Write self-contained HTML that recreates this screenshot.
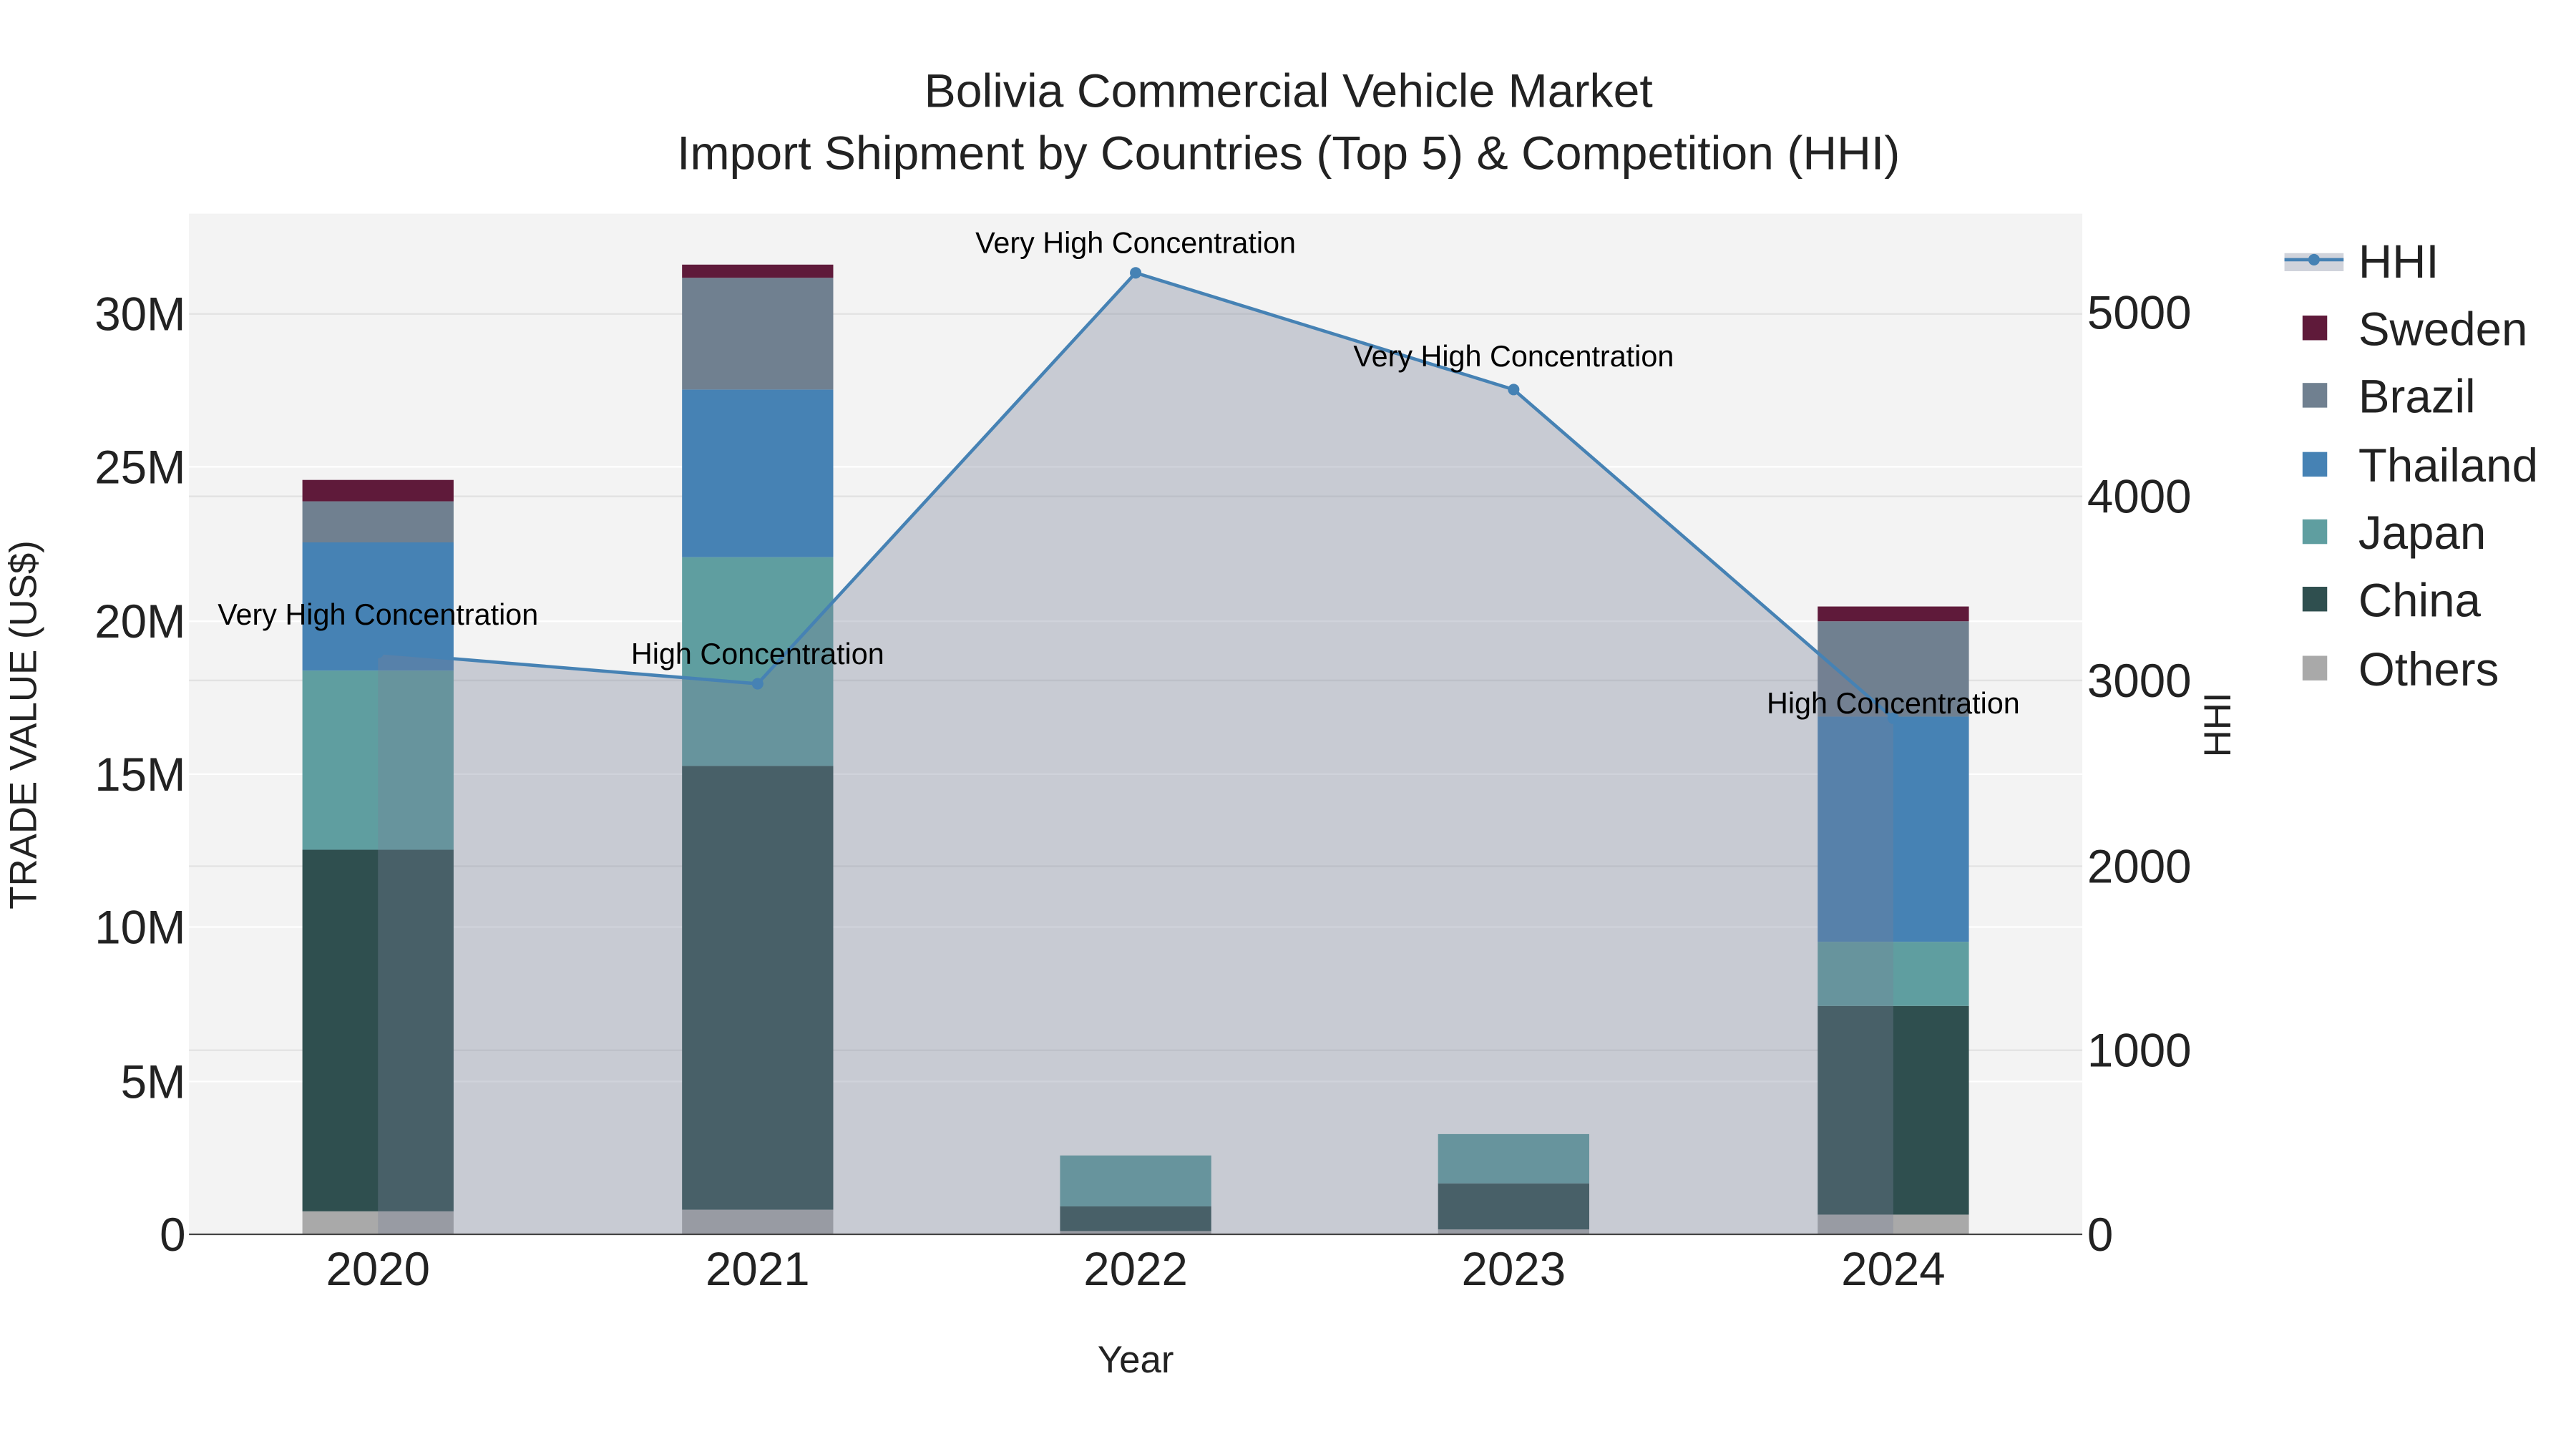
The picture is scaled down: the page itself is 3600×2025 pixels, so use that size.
<!DOCTYPE html>
<html><head><meta charset="utf-8"><style>
html,body{margin:0;padding:0;background:#fff;}
svg{display:block;font-family:"Liberation Sans",Arial,sans-serif;}
</style></head><body>
<svg width="3600" height="2025" viewBox="0 0 1567.4 881.6" preserveAspectRatio="none" xmlns="http://www.w3.org/2000/svg">
<rect x="0" y="0" width="1568" height="882" fill="#fff"/>
<rect x="115" y="130" width="1152" height="621" fill="#f3f3f3"/>
<g stroke="#e2e2e2" stroke-width="1">
<line x1="115" x2="1267" y1="302" y2="302"/><line x1="115" x2="1267" y1="414" y2="414"/>
<line x1="115" x2="1267" y1="527" y2="527"/><line x1="115" x2="1267" y1="639" y2="639"/>
<line x1="115" x2="1267" y1="191" y2="191"/>
</g>
<g stroke="#fff" stroke-width="1">
<line x1="115" x2="1267" y1="284" y2="284"/><line x1="115" x2="1267" y1="378" y2="378"/>
<line x1="115" x2="1267" y1="471" y2="471"/><line x1="115" x2="1267" y1="564" y2="564"/>
<line x1="115" x2="1267" y1="658" y2="658"/>
</g>
<g>
<rect x="184" y="737" width="92" height="14" fill="#a9a9a9"/>
<rect x="184" y="517" width="92" height="220" fill="#2f4f4f"/>
<rect x="184" y="408" width="92" height="109" fill="#5f9ea0"/>
<rect x="184" y="330" width="92" height="78" fill="#4682b4"/>
<rect x="184" y="305" width="92" height="25" fill="#708090"/>
<rect x="184" y="292" width="92" height="13" fill="#5f1a3a"/>

<rect x="415" y="736" width="92" height="15" fill="#a9a9a9"/>
<rect x="415" y="466" width="92" height="270" fill="#2f4f4f"/>
<rect x="415" y="339" width="92" height="127" fill="#5f9ea0"/>
<rect x="415" y="237" width="92" height="102" fill="#4682b4"/>
<rect x="415" y="169" width="92" height="68" fill="#708090"/>
<rect x="415" y="161" width="92" height="8" fill="#5f1a3a"/>

<rect x="645" y="749" width="92" height="2" fill="#a9a9a9"/>
<rect x="645" y="734" width="92" height="15" fill="#2f4f4f"/>
<rect x="645" y="703" width="92" height="31" fill="#5f9ea0"/>

<rect x="875" y="748" width="92" height="3" fill="#a9a9a9"/>
<rect x="875" y="720" width="92" height="28" fill="#2f4f4f"/>
<rect x="875" y="690" width="92" height="30" fill="#5f9ea0"/>

<rect x="1106" y="739" width="92" height="12" fill="#a9a9a9"/>
<rect x="1106" y="612" width="92" height="127" fill="#2f4f4f"/>
<rect x="1106" y="573" width="92" height="39" fill="#5f9ea0"/>
<rect x="1106" y="436" width="92" height="137" fill="#4682b4"/>
<rect x="1106" y="378" width="92" height="58" fill="#708090"/>
<rect x="1106" y="369" width="92" height="9" fill="#5f1a3a"/>
</g>
<polygon points="230,397 461,416 691,166 921,237 1152,437 1152,751 230,751" fill="rgba(119,130,151,0.35)"/>
<polyline points="230,397 461,416 691,166 921,237 1152,437" fill="none" stroke="#4682b4" stroke-width="2"/>
<g fill="#4682b4"><circle cx="230" cy="397" r="3.5"/><circle cx="461" cy="416" r="3.5"/><circle cx="691" cy="166" r="3.5"/><circle cx="921" cy="237" r="3.5"/><circle cx="1152" cy="437" r="3.5"/></g>
<line x1="115" x2="1267" y1="751" y2="751" stroke="#444" stroke-width="1"/>
<g font-size="18" fill="#000" text-anchor="middle">
<text x="230" y="380">Very High Concentration</text>
<text x="461" y="404">High Concentration</text>
<text x="691" y="154">Very High Concentration</text>
<text x="921" y="223">Very High Concentration</text>
<text x="1152" y="434">High Concentration</text>
</g>
<g font-size="28.8" fill="#222" text-anchor="middle">
<text x="784" y="65">Bolivia Commercial Vehicle Market</text>
<text x="784" y="103">Import Shipment by Countries (Top 5) &amp; Competition (HHI)</text>
</g>
<g font-size="28.5" fill="#222" text-anchor="end">
<text x="113" y="761">0</text><text x="113" y="668">5M</text><text x="113" y="574">10M</text>
<text x="113" y="481">15M</text><text x="113" y="388">20M</text><text x="113" y="294">25M</text><text x="113" y="201">30M</text>
</g>
<g font-size="28.5" fill="#222" text-anchor="start">
<text x="1270" y="761">0</text><text x="1270" y="649">1000</text><text x="1270" y="537">2000</text>
<text x="1270" y="424">3000</text><text x="1270" y="312">4000</text><text x="1270" y="200">5000</text>
</g>
<g font-size="28.5" fill="#222" text-anchor="middle">
<text x="230" y="782">2020</text><text x="461" y="782">2021</text><text x="691" y="782">2022</text>
<text x="921" y="782">2023</text><text x="1152" y="782">2024</text>
</g>
<text x="691" y="835" font-size="23" fill="#222" text-anchor="middle">Year</text>
<text transform="translate(22,441) rotate(-90)" font-size="23" fill="#222" text-anchor="middle">TRADE VALUE (US$)</text>
<text transform="translate(1357,441) rotate(-90)" font-size="23" fill="#222" text-anchor="middle">HHI</text>
<rect x="1390" y="154" width="36" height="11" fill="rgba(119,130,151,0.35)"/>
<line x1="1390" x2="1426" y1="158" y2="158" stroke="#4682b4" stroke-width="2"/>
<circle cx="1408" cy="158" r="3.5" fill="#4682b4"/>
<rect x="1401" y="192" width="15" height="15" fill="#5f1a3a"/>
<rect x="1401" y="233" width="15" height="15" fill="#708090"/>
<rect x="1401" y="275" width="15" height="15" fill="#4682b4"/>
<rect x="1401" y="316" width="15" height="15" fill="#5f9ea0"/>
<rect x="1401" y="357" width="15" height="15" fill="#2f4f4f"/>
<rect x="1401" y="399" width="15" height="15" fill="#a9a9a9"/>
<g font-size="28.5" fill="#222">
<text x="1435" y="169">HHI</text><text x="1435" y="210">Sweden</text><text x="1435" y="251">Brazil</text>
<text x="1435" y="293">Thailand</text><text x="1435" y="334">Japan</text><text x="1435" y="375">China</text><text x="1435" y="417">Others</text>
</g>
</svg>
</body></html>
